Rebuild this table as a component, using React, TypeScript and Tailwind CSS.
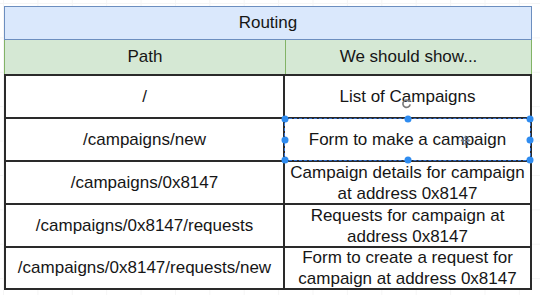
import React from 'react';

type Route = { path: string; show: string[] };

const routes: Route[] = [
  { path: '/', show: ['List of Campaigns'] },
  { path: '/campaigns/new', show: ['Form to make a campaign'] },
  { path: '/campaigns/0x8147', show: ['Campaign details for campaign', 'at address 0x8147'] },
  { path: '/campaigns/0x8147/requests', show: ['Requests for campaign at', 'address 0x8147'] },
  { path: '/campaigns/0x8147/requests/new', show: ['Form to create a request for', 'campaign at address 0x8147'] },
];

const Handle: React.FC<{ className: string }> = ({ className }) => (
  <span className={`absolute w-[7px] h-[7px] rounded-full bg-[#2f8cf0] -translate-x-1/2 -translate-y-1/2 ${className}`} />
);

const Selection: React.FC = () => (
  <div className="absolute -left-[1px] -right-[1px] -top-[1px] -bottom-[1px] border border-dashed border-[#2f6fd0] pointer-events-none">
    <Handle className="left-0 top-0" />
    <Handle className="left-1/2 top-0" />
    <Handle className="left-full top-0" />
    <Handle className="left-0 top-1/2" />
    <Handle className="left-full top-1/2" />
    <Handle className="left-0 top-full" />
    <Handle className="left-1/2 top-full" />
    <Handle className="left-full top-full" />
  </div>
);

const RotateCursor: React.FC = () => (
  <svg className="absolute left-[116px] top-[22px]" width="11" height="11" viewBox="0 0 12 12">
    <path d="M9.5 4.2A4 4 0 1 0 10 7" fill="none" stroke="#7a7a7a" strokeWidth="1.8" />
    <path d="M7.5 3.6 L10.6 4.4 L10.2 1.2 Z" fill="#7a7a7a" />
  </svg>
);

const MoveCursor: React.FC = () => (
  <svg className="absolute left-[175px] top-[16px]" width="11" height="11" viewBox="0 0 12 12">
    <path d="M6 0.5 L8 3 H4 Z M6 11.5 L4 9 H8 Z M0.5 6 L3 4 V8 Z M11.5 6 L9 8 V4 Z" fill="#7a7a7a" />
    <path d="M6 2.5 V9.5 M2.5 6 H9.5" stroke="#7a7a7a" strokeWidth="1.3" />
  </svg>
);

const App: React.FC = () => {
  return (
    <div className="w-[540px] h-[295px] overflow-hidden bg-white bg-[linear-gradient(#f5f5f5_1px,transparent_1px),linear-gradient(90deg,#f5f5f5_1px,transparent_1px)] bg-size-[34.4px_34.4px] bg-position-[3px_3px] pt-[6px] pl-[4px] font-['Liberation_Sans',Arial,sans-serif] text-[17px] text-[#161616]">
      <div className="w-[528px] flex flex-col">
        <div className="h-[34px] flex items-center justify-center bg-[#dae8fc] border border-[#6c8ebf]">
          Routing
        </div>
        <div className="h-[34px] flex bg-[#d5e8d4] border-x border-[#82b366]">
          <div className="w-[281px] flex items-center justify-center border-r border-[#82b366]">Path</div>
          <div className="flex-1 flex items-center justify-center">We should show...</div>
        </div>
        <div className="flex flex-col border-2 border-[#2a2a2a] bg-white">
          {routes.map((r, i) => (
            <div
              key={r.path}
              className={`flex ${i < routes.length - 1 ? 'h-[43px] border-b-2 border-[#2a2a2a]' : 'h-[40px]'}`}
            >
              <div className="w-[279px] flex items-center justify-center border-r-2 border-[#2a2a2a]">
                {r.path}
              </div>
              <div className="relative flex-1 flex flex-col items-center justify-center leading-[21px] text-center">
                {r.show.map((line) => (
                  <span key={line}>{line}</span>
                ))}
                {i === 0 && <RotateCursor />}
                {i === 1 && (
                  <>
                    <Selection />
                    <MoveCursor />
                  </>
                )}
              </div>
            </div>
          ))}
        </div>
      </div>
    </div>
  );
};

export default App;
